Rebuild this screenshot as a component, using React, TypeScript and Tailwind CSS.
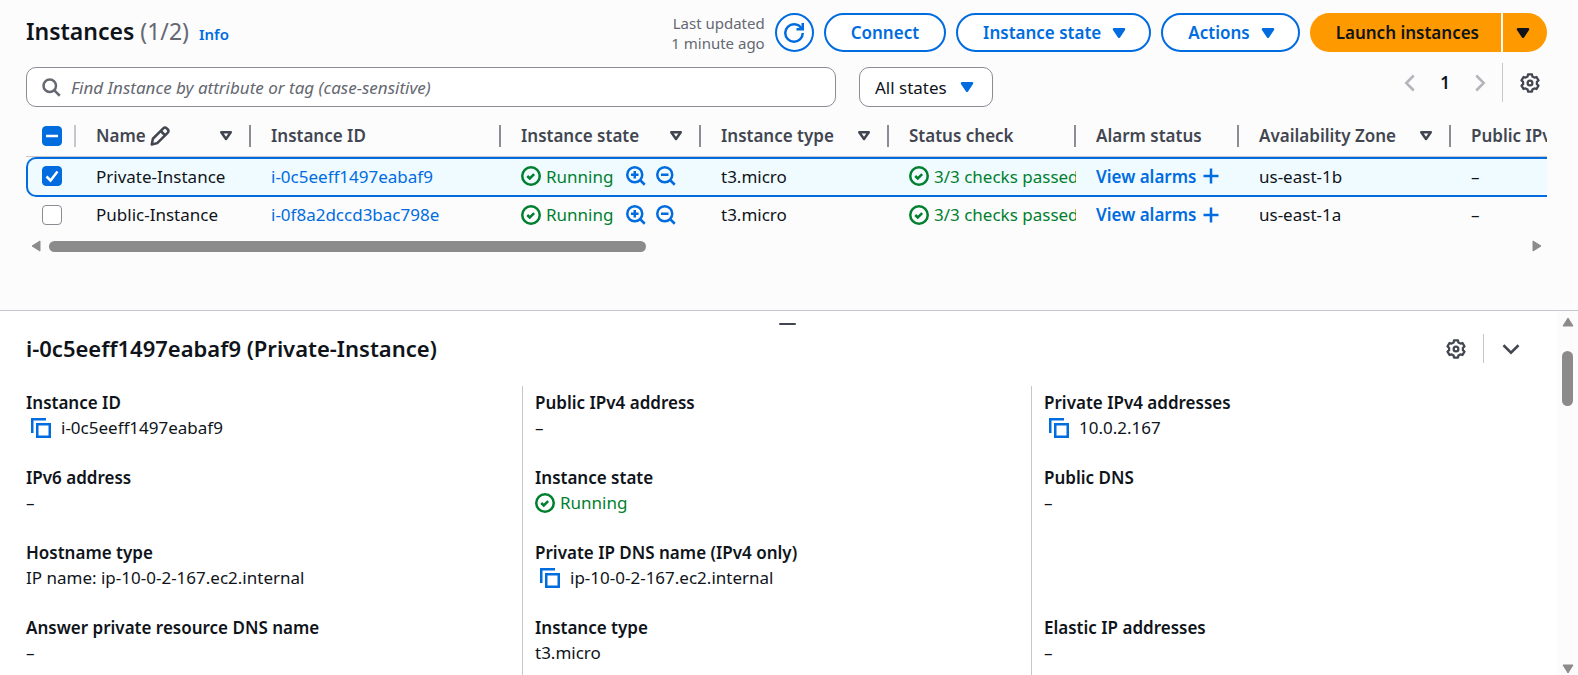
import React, { useEffect, useRef } from "react";

type IconProps = { className?: string };

function Svg({ className = "", children }: { className?: string; children: React.ReactNode }) {
  return (
    <svg
      viewBox="0 0 16 16"
      aria-hidden="true"
      className={`size-5 shrink-0 fill-none stroke-current stroke-2 ${className}`}
    >
      {children}
    </svg>
  );
}

const gearOutline = (() => {
  const points: string[] = [];
  for (let lobe = 0; lobe < 6; lobe++) {
    for (const [offset, radius] of [[-13, 7.1], [13, 7.1], [20, 5.6], [40, 5.6]]) {
      const angle = ((lobe * 60 - 90 + offset) * Math.PI) / 180;
      points.push(`${(8 + radius * Math.cos(angle)).toFixed(2)} ${(8 + radius * Math.sin(angle)).toFixed(2)}`);
    }
  }
  return `M${points.join("L")}Z`;
})();

const GearIcon = ({ className }: IconProps) => (
  <Svg className={className}>
    <path d={gearOutline} strokeLinejoin="round" strokeWidth="1.8" />
    <circle cx="8" cy="8" r="1.9" strokeWidth="1.8" />
  </Svg>
);

const SearchIcon = ({ className }: IconProps) => (
  <Svg className={className}>
    <circle cx="7" cy="7" r="5" />
    <path d="m15 15-4.5-4.5" />
  </Svg>
);

const RefreshIcon = () => (
  <Svg>
    <path d="M10 5h5V0" />
    <path d="M15 8a6.96 6.96 0 0 1-7 7 6.96 6.96 0 0 1-7-7 6.96 6.96 0 0 1 7-7 6.87 6.87 0 0 1 6.3 4" />
  </Svg>
);

const SuccessIcon = () => (
  <Svg>
    <circle cx="8" cy="8" r="7" />
    <path d="m5 8 2 2 3.52-3.52" />
  </Svg>
);

const ZoomIcon = ({ plus }: { plus?: boolean }) => (
  <Svg>
    <circle cx="7" cy="7" r="6" />
    <path d="m11 11 4 4M4 7h6" />
    {plus && <path d="M7 4v6" />}
  </Svg>
);

const CopyIcon = () => (
  <Svg>
    <path d="M1 12V1h11" />
    <path d="M5 5h10v10H5z" />
  </Svg>
);

const EditIcon = () => (
  <Svg>
    <path d="M10.6 1.9a2 2 0 0 1 2.8 0l.7.7a2 2 0 0 1 0 2.8l-8.3 8.3L1.4 14.8l.9-4.6z" strokeLinejoin="round" />
    <path d="m8.6 4 3.4 3.4" />
  </Svg>
);

const PlusIcon = () => (
  <Svg>
    <path d="M8 2v12M2 8h12" />
  </Svg>
);

const CaretIcon = ({ className = "" }: IconProps) => (
  <Svg className={className}>
    <path d="M4 5h8l-4 6z" className="fill-current" strokeLinejoin="round" />
  </Svg>
);

const SortIcon = () => (
  <Svg>
    <path d="M4.2 5h7.6L8 10.4z" strokeLinejoin="round" />
  </Svg>
);

const ChevronIcon = ({ d, className }: { d: string; className?: string }) => (
  <Svg className={className}>
    <path d={d} />
  </Svg>
);

const ArrowIcon = ({ d, className = "" }: { d: string; className?: string }) => (
  <svg viewBox="0 0 12 12" aria-hidden="true" className={`size-3 shrink-0 fill-[#8b8b8b] stroke-[#8b8b8b] ${className}`}>
    <path d={d} strokeLinejoin="round" strokeWidth="1" />
  </svg>
);

function PillButton({ label, caret }: { label: string; caret?: boolean }) {
  return (
    <button
      type="button"
      className={`flex h-[39px] items-center gap-2 rounded-full border-2 border-[#006ce0] bg-white pl-[25px] font-semibold text-[#006ce0] ${caret ? "pr-5" : "pr-[25px]"}`}
    >
      {label}
      {caret && <CaretIcon />}
    </button>
  );
}

function Checkbox({ label, checked, mixed }: { label: string; checked?: boolean; mixed?: boolean }) {
  const ref = useRef<HTMLInputElement>(null);
  useEffect(() => {
    if (ref.current) ref.current.indeterminate = !!mixed;
  }, [mixed]);
  return (
    <span className="grid size-5 place-items-center">
      <input
        ref={ref}
        type="checkbox"
        aria-label={label}
        defaultChecked={checked}
        className="col-start-1 row-start-1 size-5 appearance-none rounded-[4px] border border-[#8c8c94] bg-white checked:border-[#006ce0] checked:bg-[#006ce0] indeterminate:border-[#006ce0] indeterminate:bg-[#006ce0]"
      />
      {(checked || mixed) && (
        <svg
          viewBox="0 0 20 20"
          aria-hidden="true"
          className="pointer-events-none col-start-1 row-start-1 size-5 fill-none stroke-white stroke-[2.5]"
        >
          <path d={mixed ? "M4 10h12" : "m4.5 10.5 4 4 7-9"} />
        </svg>
      )}
    </span>
  );
}

const columns = [
  { name: "Name", width: "w-[175px]", sortable: true, editable: true },
  { name: "Instance ID", width: "w-[250px]" },
  { name: "Instance state", width: "w-[200px]", sortable: true },
  { name: "Instance type", width: "w-[188px]", sortable: true },
  { name: "Status check", width: "w-[187px]" },
  { name: "Alarm status", width: "w-[163px]" },
  { name: "Availability Zone", width: "w-[212px]", sortable: true },
  { name: "Public IPv4 DNS", width: "w-[250px]" },
];

const instances = [
  { name: "Private-Instance", id: "i-0c5eeff1497eabaf9", zone: "us-east-1b", selected: true },
  { name: "Public-Instance", id: "i-0f8a2dccd3bac798e", zone: "us-east-1a", selected: false },
];

function InstanceRow({ name, id, zone, selected }: (typeof instances)[number]) {
  const edge = selected ? "h-10 border-y-2 border-[#006ce0] bg-[#f0fbff] pb-[2px]" : "h-[39px] pb-1";
  const cell = `overflow-hidden whitespace-nowrap pl-5 ${edge}`;
  return (
    <tr>
      <td className={selected ? `rounded-l-[10px] border-l-2 pl-[14px] ${edge}` : `pl-4 ${edge}`}>
        <Checkbox label={`Select ${name}`} checked={selected} />
      </td>
      <td className={cell}>{name}</td>
      <td className={cell}>
        <a href="#instance" className="text-[#006ce0]">{id}</a>
      </td>
      <td className={cell}>
        <div className="flex items-center">
          <span className="flex items-center gap-[5px] text-[#00802f]">
            <SuccessIcon />
            Running
          </span>
          <span className="flex gap-[10px] pl-[13px] text-[#006ce0]">
            <button type="button" aria-label="Filter for this state"><ZoomIcon plus /></button>
            <button type="button" aria-label="Filter out this state"><ZoomIcon /></button>
          </span>
        </div>
      </td>
      <td className={cell}>t3.micro</td>
      <td className={cell}>
        <div className="flex items-center gap-[5px] overflow-hidden text-[#00802f]">
          <SuccessIcon />
          3/3 checks passed
        </div>
      </td>
      <td className={cell}>
        <div className="flex items-center gap-[5px] font-semibold text-[#006ce0]">
          <a href="#alarms">View alarms</a>
          <button type="button" aria-label="Create alarm"><PlusIcon /></button>
        </div>
      </td>
      <td className={cell}>{zone}</td>
      <td className={cell}>–</td>
    </tr>
  );
}

function InstancesTable() {
  return (
    <div className="overflow-hidden">
      <table className="w-[1675px] table-fixed border-separate border-spacing-0">
        <colgroup>
          <col className="w-[50px]" />
          {columns.map((c) => (
            <col key={c.name} className={c.width} />
          ))}
        </colgroup>
        <thead>
          <tr className="text-left text-[#424650]">
            <th className="h-[42px] border-b border-[#c6c6cd] p-0 pl-4">
              <div className="flex h-[22px] items-center border-r-2 border-[#c6c6cd]">
                <Checkbox label="Select all instances" mixed />
              </div>
            </th>
            {columns.map((c) => (
              <th key={c.name} className="border-b border-[#c6c6cd] p-0 pl-5 font-semibold">
                <div className="flex h-[22px] items-center justify-between border-r-2 border-[#8c8c94] pr-[13px] whitespace-nowrap">
                  <span className="flex items-center gap-1">
                    {c.name}
                    {c.editable && <EditIcon />}
                  </span>
                  {c.sortable && (
                    <button type="button" aria-label={`Sort by ${c.name}`}><SortIcon /></button>
                  )}
                </div>
              </th>
            ))}
          </tr>
        </thead>
        <tbody>
          {instances.map((row) => (
            <InstanceRow key={row.id} {...row} />
          ))}
        </tbody>
      </table>
    </div>
  );
}

type Detail = { label: string; value: string; kind?: "copy" | "status" } | null;

const details: Detail[][] = [
  [
    { label: "Instance ID", value: "i-0c5eeff1497eabaf9", kind: "copy" },
    { label: "IPv6 address", value: "–" },
    { label: "Hostname type", value: "IP name: ip-10-0-2-167.ec2.internal" },
    { label: "Answer private resource DNS name", value: "–" },
  ],
  [
    { label: "Public IPv4 address", value: "–" },
    { label: "Instance state", value: "Running", kind: "status" },
    { label: "Private IP DNS name (IPv4 only)", value: "ip-10-0-2-167.ec2.internal", kind: "copy" },
    { label: "Instance type", value: "t3.micro" },
  ],
  [
    { label: "Private IPv4 addresses", value: "10.0.2.167", kind: "copy" },
    { label: "Public DNS", value: "–" },
    null,
    { label: "Elastic IP addresses", value: "–" },
  ],
];

function DetailItem({ item }: { item: Detail }) {
  if (!item) return <div className="h-[50px]" />;
  return (
    <div>
      <dt className="font-semibold">{item.label}</dt>
      <dd className={item.kind === "status" ? "flex items-center gap-[5px] text-[#00802f]" : "flex items-center"}>
        {item.kind === "copy" && (
          <button type="button" aria-label={`Copy ${item.label}`} className="mr-[10px] ml-[5px] text-[#006ce0]">
            <CopyIcon />
          </button>
        )}
        {item.kind === "status" && <SuccessIcon />}
        {item.value}
      </dd>
    </div>
  );
}

export default function App() {
  return (
    <div className="flex h-screen flex-col overflow-hidden bg-[#fcfcfd] font-['Noto_Sans',sans-serif] text-[17px] leading-[25px] text-[#0f141a]">
      <main className="shrink-0 pr-[31px] pb-[58px] pl-[26px]">
        <header className="mt-[13px] flex h-[39px] items-center justify-between">
          <div className="flex items-baseline gap-[10px]">
            <h1 className="text-[23px] font-semibold">
              Instances <span className="font-normal text-[#656871]">(1/2)</span>
            </h1>
            <a href="#info" className="text-[15px] font-semibold text-[#006ce0]">Info</a>
          </div>
          <div className="flex items-center gap-[10px]">
            <p className="text-right text-[15px] leading-5 text-[#656871]">
              Last updated
              <br />1 minute ago
            </p>
            <button
              type="button"
              aria-label="Refresh"
              className="grid size-[39px] place-items-center rounded-full border-2 border-[#006ce0] bg-white text-[#006ce0]"
            >
              <RefreshIcon />
            </button>
            <PillButton label="Connect" />
            <PillButton label="Instance state" caret />
            <PillButton label="Actions" caret />
            <div className="flex h-[39px] gap-[2px] font-semibold">
              <button type="button" className="rounded-l-full bg-[#ff9900] pr-[22px] pl-[26px]">Launch instances</button>
              <button type="button" aria-label="More launch options" className="rounded-r-full bg-[#ff9900] pr-[14px] pl-[10px]">
                <CaretIcon />
              </button>
            </div>
          </div>
        </header>

        <div className="flex items-start justify-between pt-[15px]">
          <div className="flex flex-1 gap-[23px]">
            <label className="flex h-10 w-[810px] items-center gap-[10px] rounded-[10px] border border-[#8c8c94] bg-white px-[14px]">
              <SearchIcon className="text-[#656871]" />
              <input
                type="search"
                aria-label="Find instances"
                placeholder="Find Instance by attribute or tag (case-sensitive)"
                className="w-full outline-none placeholder:text-[#656871] placeholder:italic"
              />
            </label>
            <div className="grid h-10 w-[134px] items-center">
              <select
                aria-label="Instance state filter"
                className="col-start-1 row-start-1 h-10 w-full appearance-none rounded-[10px] border border-[#8c8c94] bg-white pl-[15px]"
              >
                <option>All states</option>
              </select>
              <CaretIcon className="pointer-events-none col-start-1 row-start-1 mr-4 justify-self-end text-[#006ce0]" />
            </div>
          </div>
          <div className="-mt-1 flex items-center">
            <nav aria-label="Pagination" className="flex items-center gap-[20px] pr-3 text-[#b4b4bb]">
              <button type="button" aria-label="Previous page">
                <ChevronIcon d="M11 2 5 8l6 6" />
              </button>
              <button type="button" aria-current="page" className="font-semibold text-[#0f141a]">1</button>
              <button type="button" aria-label="Next page">
                <ChevronIcon d="m5 2 6 6-6 6" />
              </button>
            </nav>
            <div className="flex h-[39px] items-center border-l border-[#c6c6cd] pr-[7px] pl-[17px] text-[#424650]">
              <button type="button" aria-label="Preferences"><GearIcon /></button>
            </div>
          </div>
        </div>

        <div className="pt-2">
          <InstancesTable />
          <div className="flex items-center px-1 pt-1">
            <ArrowIcon d="M10 1v10L2 6z" />
            <div className="mx-[7px] flex-1">
              <div className="h-[11px] w-[40.5%] rounded-full bg-[#8b8b8b]" />
            </div>
            <ArrowIcon d="M2 1v10l8-5z" />
          </div>
        </div>
      </main>

      <section className="flex min-h-0 flex-1 border-t border-[#c6c6cd] bg-white">
        <div className="flex min-w-0 flex-1 flex-col pr-[29px] pl-[26px]">
          <button type="button" aria-label="Resize panel" className="ml-[21px] flex h-[23px] items-center justify-center pt-[2px]">
            <span className="h-[2px] w-[17px] rounded-full bg-[#424650]" />
          </button>
          <header className="flex h-[29px] shrink-0 items-center justify-between">
            <h2 className="text-[22px] font-semibold">i-0c5eeff1497eabaf9 (Private-Instance)</h2>
            <div className="flex h-full items-center pr-[7px] text-[#424650]">
              <button type="button" aria-label="Panel preferences"><GearIcon /></button>
              <span className="mx-[17px] h-full w-px bg-[#c6c6cd]" />
              <button type="button" aria-label="Collapse panel">
                <ChevronIcon d="m2 5 6 6 6-6" />
              </button>
            </div>
          </header>
          <div className="grid min-h-0 flex-1 grid-cols-3 gap-x-[25px] pt-[23px]">
            {details.map((column, i) => (
              <dl
                key={i}
                className={`flex flex-col gap-[25px] pt-1 ${i > 0 ? "-ml-[13px] border-l border-[#c6c6cd] pl-3" : ""}`}
              >
                {column.map((item, j) => (
                  <DetailItem key={j} item={item} />
                ))}
              </dl>
            ))}
          </div>
        </div>
        <div className="flex w-[21px] flex-col items-center bg-[#fcfcfc] pt-[5px]">
          <ArrowIcon d="M1 10h10L6 2z" />
          <div className="flex-1 pt-[23px]">
            <div className="h-[55px] w-[11px] rounded-full bg-[#8b8b8b]" />
          </div>
          <ArrowIcon d="M1 2h10l-5 8z" />
        </div>
      </section>
    </div>
  );
}
